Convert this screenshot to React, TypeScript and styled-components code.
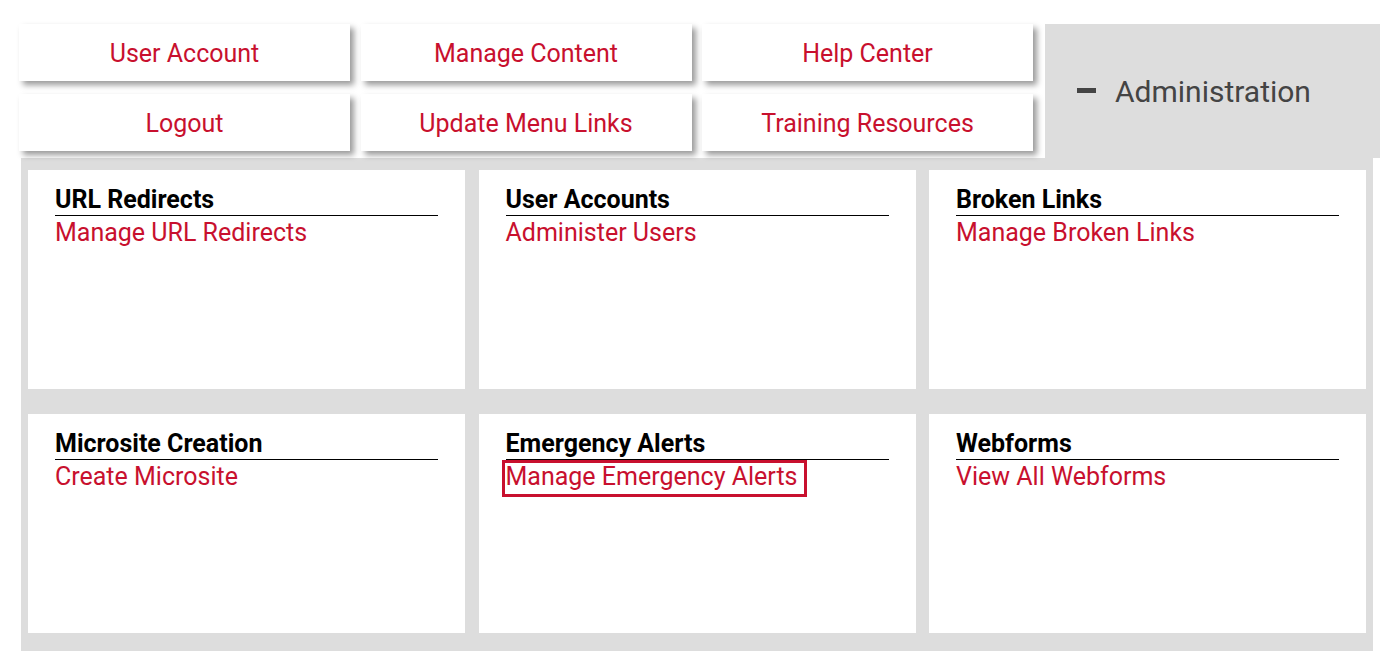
import React from "react";
import styled, { createGlobalStyle } from "styled-components";

const GlobalStyle = createGlobalStyle`
  body {
    margin: 0;
    background: #fff;
    font-family: Roboto, "Liberation Sans", Arial, sans-serif;
  }
`;

const quickLinks = [
  "User Account",
  "Manage Content",
  "Help Center",
  "Logout",
  "Update Menu Links",
  "Training Resources",
];

const tools = [
  { title: "URL Redirects", link: "Manage URL Redirects" },
  { title: "User Accounts", link: "Administer Users" },
  { title: "Broken Links", link: "Manage Broken Links" },
  { title: "Microsite Creation", link: "Create Microsite" },
  { title: "Emergency Alerts", link: "Manage Emergency Alerts", focused: true },
  { title: "Webforms", link: "View All Webforms" },
];

const App: React.FC = () => {
  return (
    <>
      <GlobalStyle />
      <Page>
        <Header>
          <ButtonGrid>
            {quickLinks.map((label) => (
              <QuickButton key={label} href="#">
                {label}
              </QuickButton>
            ))}
          </ButtonGrid>
          <AdminTab>
            <Dash />
            <span>Administration</span>
          </AdminTab>
        </Header>

        <Panel>
          {tools.map((t) => (
            <Card key={t.title}>
              <CardTitle>{t.title}</CardTitle>
              <CardLink href="#" $focused={t.focused}>
                {t.link}
              </CardLink>
            </Card>
          ))}
        </Panel>
      </Page>
    </>
  );
};

const Page = styled.div`
  padding: 24px 0 0 19px;
`;

const Header = styled.div`
  display: flex;
  align-items: stretch;
  width: 1361px;
`;

const ButtonGrid = styled.div`
  display: grid;
  grid-template-columns: repeat(3, 331px);
  column-gap: 10.5px;
  row-gap: 13px;
  padding-bottom: 7px;
`;

const QuickButton = styled.a`
  display: flex;
  align-items: center;
  justify-content: center;
  box-sizing: border-box;
  height: 57px;
  padding-top: 2px;
  background: #fff;
  color: #c8102e;
  font-size: 25px;
  text-decoration: none;
  box-shadow: 4px 4px 6px rgba(0, 0, 0, 0.4);
`;

const AdminTab = styled.div`
  flex: 1;
  margin-left: 12px;
  display: flex;
  align-items: center;
  gap: 19px;
  padding-left: 32px;
  background: #dddddd;
  color: #444;
  font-size: 30px;
`;

const Dash = styled.i`
  display: block;
  width: 19px;
  height: 5px;
  margin-top: -2px;
  background: #444;
`;

const Panel = styled.div`
  margin-left: 2px;
  width: 1352px;
  box-sizing: border-box;
  background: #dddddd;
  padding: 12px 7px 18px;
  display: grid;
  grid-template-columns: repeat(3, 1fr);
  column-gap: 13.5px;
  row-gap: 25px;
`;

const Card = styled.div`
  height: 219px;
  box-sizing: border-box;
  background: #fff;
  padding: 15px 27px 0;
`;

const CardTitle = styled.h3`
  margin: 0;
  font-size: 25px;
  font-weight: 700;
  line-height: 30px;
  color: #000;
  border-bottom: 1px solid #000;
`;

const CardLink = styled.a<{ $focused?: boolean }>`
  display: inline-block;
  margin-top: 4px;
  padding: 0 6px 4px 0;
  font-size: 25px;
  line-height: 25px;
  color: #c8102e;
  text-decoration: none;
  outline: ${(p) => (p.$focused ? "3px solid #c8102e" : "none")};
  outline-offset: 1px;
`;

export default App;
